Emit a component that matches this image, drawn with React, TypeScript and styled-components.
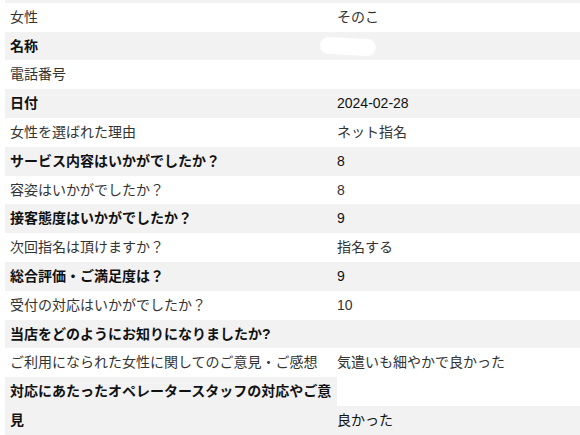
import styled, { createGlobalStyle } from 'styled-components';

const GlobalStyle = createGlobalStyle`
  body {
    margin: 0;
    background: #fff;
    font-family: 'Liberation Sans', 'Noto Sans CJK JP', sans-serif;
  }
`;

const grey = '#f2f2f2';

const StyledPage = styled.div`
  width: 580px;
  height: 435px;
  overflow: hidden;
  padding-left: 5px;
  box-sizing: border-box;
`;

const StyledList = styled.dl`
  margin: -26px 0 0;
  width: 620px;
  font-size: 14px;
  line-height: 28.8px;
`;

const StyledRow = styled.div`
  display: flex;
  align-items: flex-end;
  min-height: 28.8px;
`;

const StyledLabel = styled.dt<{ $even: boolean }>`
  width: 332px;
  flex-shrink: 0;
  box-sizing: border-box;
  padding-left: 5px;
  background: ${(p) => (p.$even ? grey : '#fff')};
  font-weight: ${(p) => (p.$even ? 'bold' : 'normal')};
  color: ${(p) => (p.$even ? '#111' : '#333')};
  align-self: stretch;
`;

const StyledValue = styled.dd<{ $even: boolean }>`
  flex: 1;
  margin: 0;
  min-height: 28.8px;
  background: ${(p) => (p.$even ? grey : '#fff')};
  color: ${(p) => (p.$even ? '#111' : '#333')};
`;

const StyledRedacted = styled.span`
  display: inline-block;
  vertical-align: middle;
  width: 56px;
  height: 17px;
  margin-left: -17px;
  border-radius: 9px;
  background: #fff;
  filter: blur(0.6px);
  transform: rotate(3deg);
`;

type Item = {
  label: string;
  value?: string;
  redacted?: boolean;
};

const items: Item[] = [
  { label: '' },
  { label: '女性', value: 'そのこ' },
  { label: '名称', redacted: true },
  { label: '電話番号' },
  { label: '日付', value: '2024-02-28' },
  { label: '女性を選ばれた理由', value: 'ネット指名' },
  { label: 'サービス内容はいかがでしたか？', value: '8' },
  { label: '容姿はいかがでしたか？', value: '8' },
  { label: '接客態度はいかがでしたか？', value: '9' },
  { label: '次回指名は頂けますか？', value: '指名する' },
  { label: '総合評価・ご満足度は？', value: '9' },
  { label: '受付の対応はいかがでしたか？', value: '10' },
  { label: '当店をどのようにお知りになりましたか?' },
  { label: 'ご利用になられた女性に関してのご意見・ご感想', value: '気遣いも細やかで良かった' },
  { label: '対応にあたったオペレータースタッフの対応やご意見', value: '良かった' },
];

export default function App() {
  return (
    <StyledPage>
      <GlobalStyle />
      <StyledList>
        {items.map((item, i) => {
          const even = i % 2 === 0;
          return (
            <StyledRow key={i}>
              <StyledLabel $even={even}>{item.label}</StyledLabel>
              <StyledValue $even={even}>
                {item.redacted ? <StyledRedacted /> : item.value}
              </StyledValue>
            </StyledRow>
          );
        })}
      </StyledList>
    </StyledPage>
  );
}
